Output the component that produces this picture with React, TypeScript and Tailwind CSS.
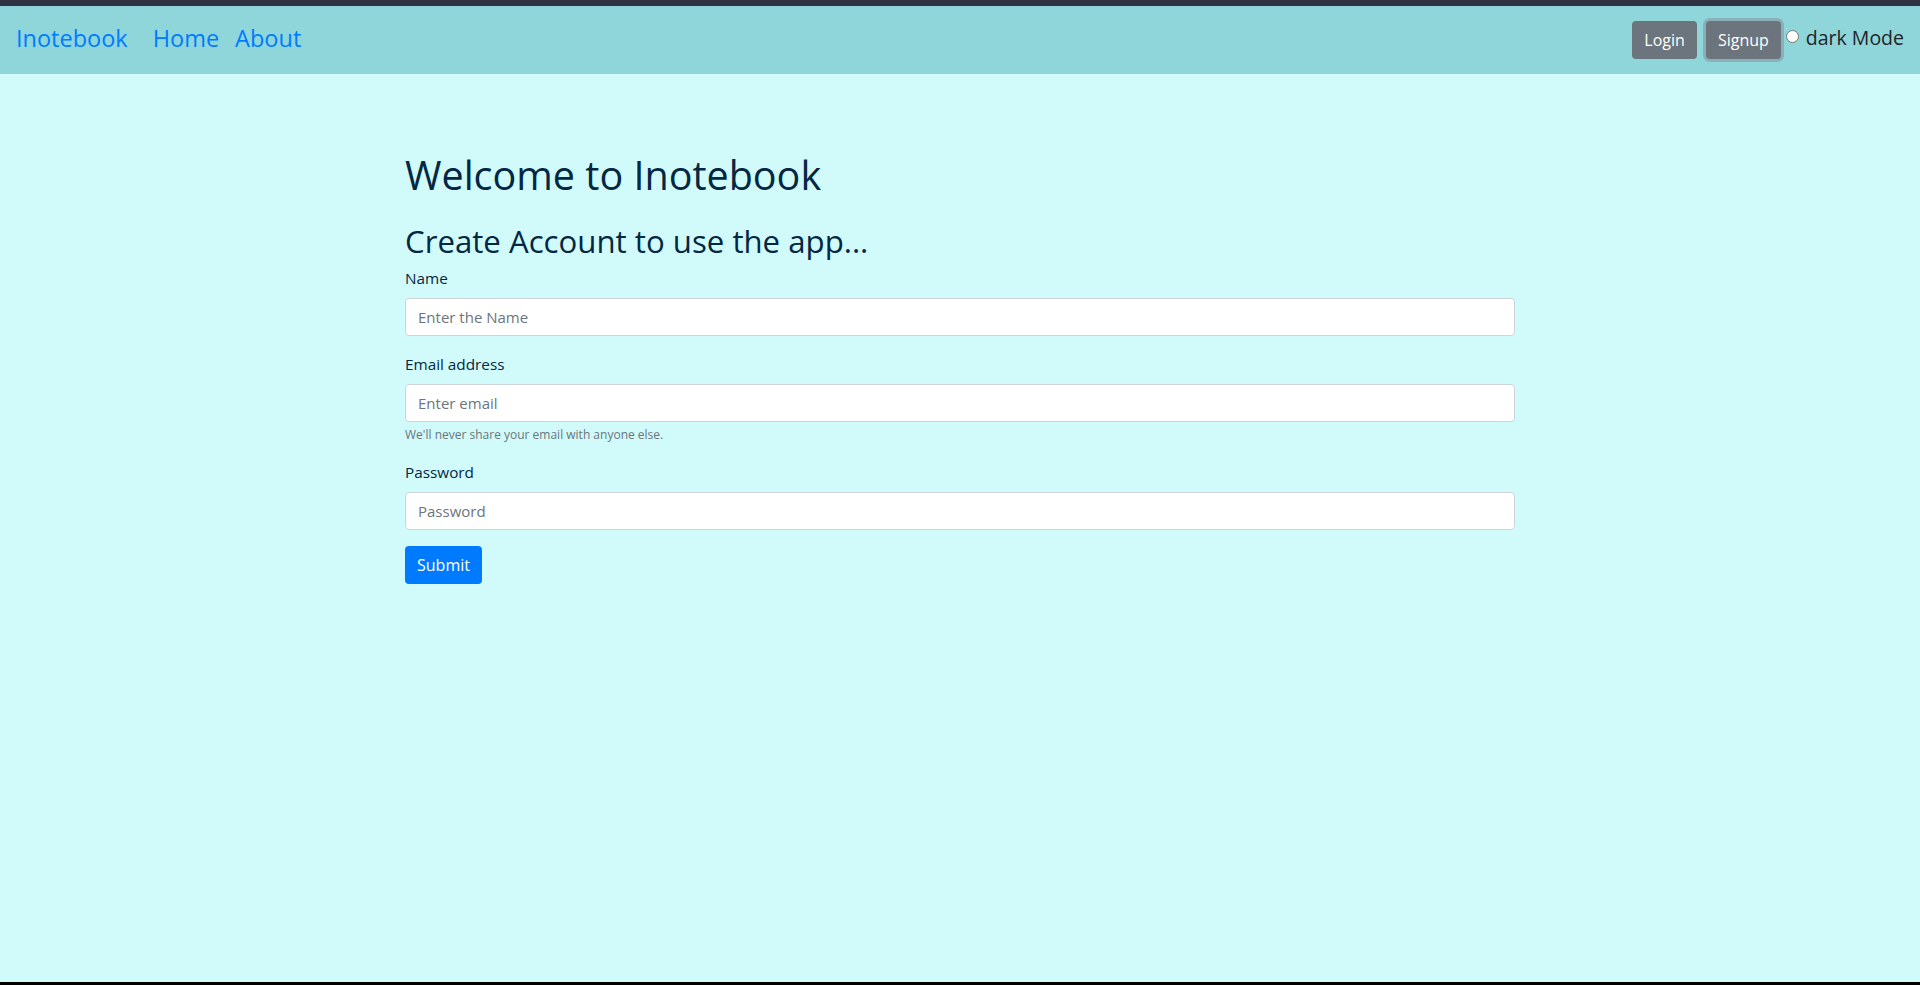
import React from "react";

export default function App() {
  return (
    <div className="flex h-[985px] flex-col overflow-hidden font-['Open_Sans',sans-serif]">
      <div className="h-[6px] bg-[#2f3241]" />
      <nav className="flex h-[68px] items-center bg-[#8fd6da] pb-[3px] pl-4 pr-4">
        <a className="text-[23.5px] text-[#007bff]">Inotebook</a>
        <a className="ml-[25px] text-[23.5px] text-[#007bff]">Home</a>
        <a className="ml-[16px] text-[23.5px] text-[#007bff]">About</a>
        <div className="ml-auto flex items-center pt-[3px]">
          <button className="h-[38px] rounded-[4px] bg-[#6c757d] px-3 text-[16px] text-white">Login</button>
          <button className="ml-[9px] h-[38px] rounded-[4px] bg-[#6c757d] px-3 text-[16px] text-white shadow-[0_0_0_3px_rgba(130,138,145,0.5)]">
            Signup
          </button>
          <span className="mb-[8px] ml-[5px] inline-block h-[13px] w-[13px] rounded-full border border-[#767676] bg-white" />
          <span className="mb-[4px] ml-[7px] text-[19.5px] text-[#212529]">dark Mode</span>
        </div>
      </nav>
      <main className="flex-1 border-b-[3px] border-black bg-[#d0fbfa]">
        <div className="mx-auto w-[1110px] pt-[77px] text-[#042743]">
          <h1 className="mb-[23px] text-[39.5px] leading-[48px]">Welcome to Inotebook</h1>
          <h2 className="mb-[6px] text-[31.2px] leading-[38px]">Create Account to use the app...</h2>
          <form>
            <div className="mb-4">
              <label className="mb-2 block text-[15.3px] leading-6">Name</label>
              <input
                className="block h-[38px] w-full rounded-[4px] border border-[#ced4da] bg-white px-3 text-[15px] text-[#495057] placeholder:text-[#6c757d]"
                placeholder="Enter the Name"
              />
            </div>
            <div className="mb-4">
              <label className="mb-2 block text-[15.3px] leading-6">Email address</label>
              <input
                className="block h-[38px] w-full rounded-[4px] border border-[#ced4da] bg-white px-3 text-[15px] text-[#495057] placeholder:text-[#6c757d]"
                placeholder="Enter email"
              />
              <small className="mt-1 block text-[12px] leading-[18px] text-[#6c757d]">We'll never share your email with anyone else.</small>
            </div>
            <div className="mb-4">
              <label className="mb-2 block text-[15.3px] leading-6">Password</label>
              <input
                type="password"
                className="block h-[38px] w-full rounded-[4px] border border-[#ced4da] bg-white px-3 text-[15px] text-[#495057] placeholder:text-[#6c757d]"
                placeholder="Password"
              />
            </div>
            <button type="button" className="h-[38px] rounded-[4px] bg-[#007bff] px-3 text-[16px] text-white">
              Submit
            </button>
          </form>
        </div>
      </main>
    </div>
  );
}
